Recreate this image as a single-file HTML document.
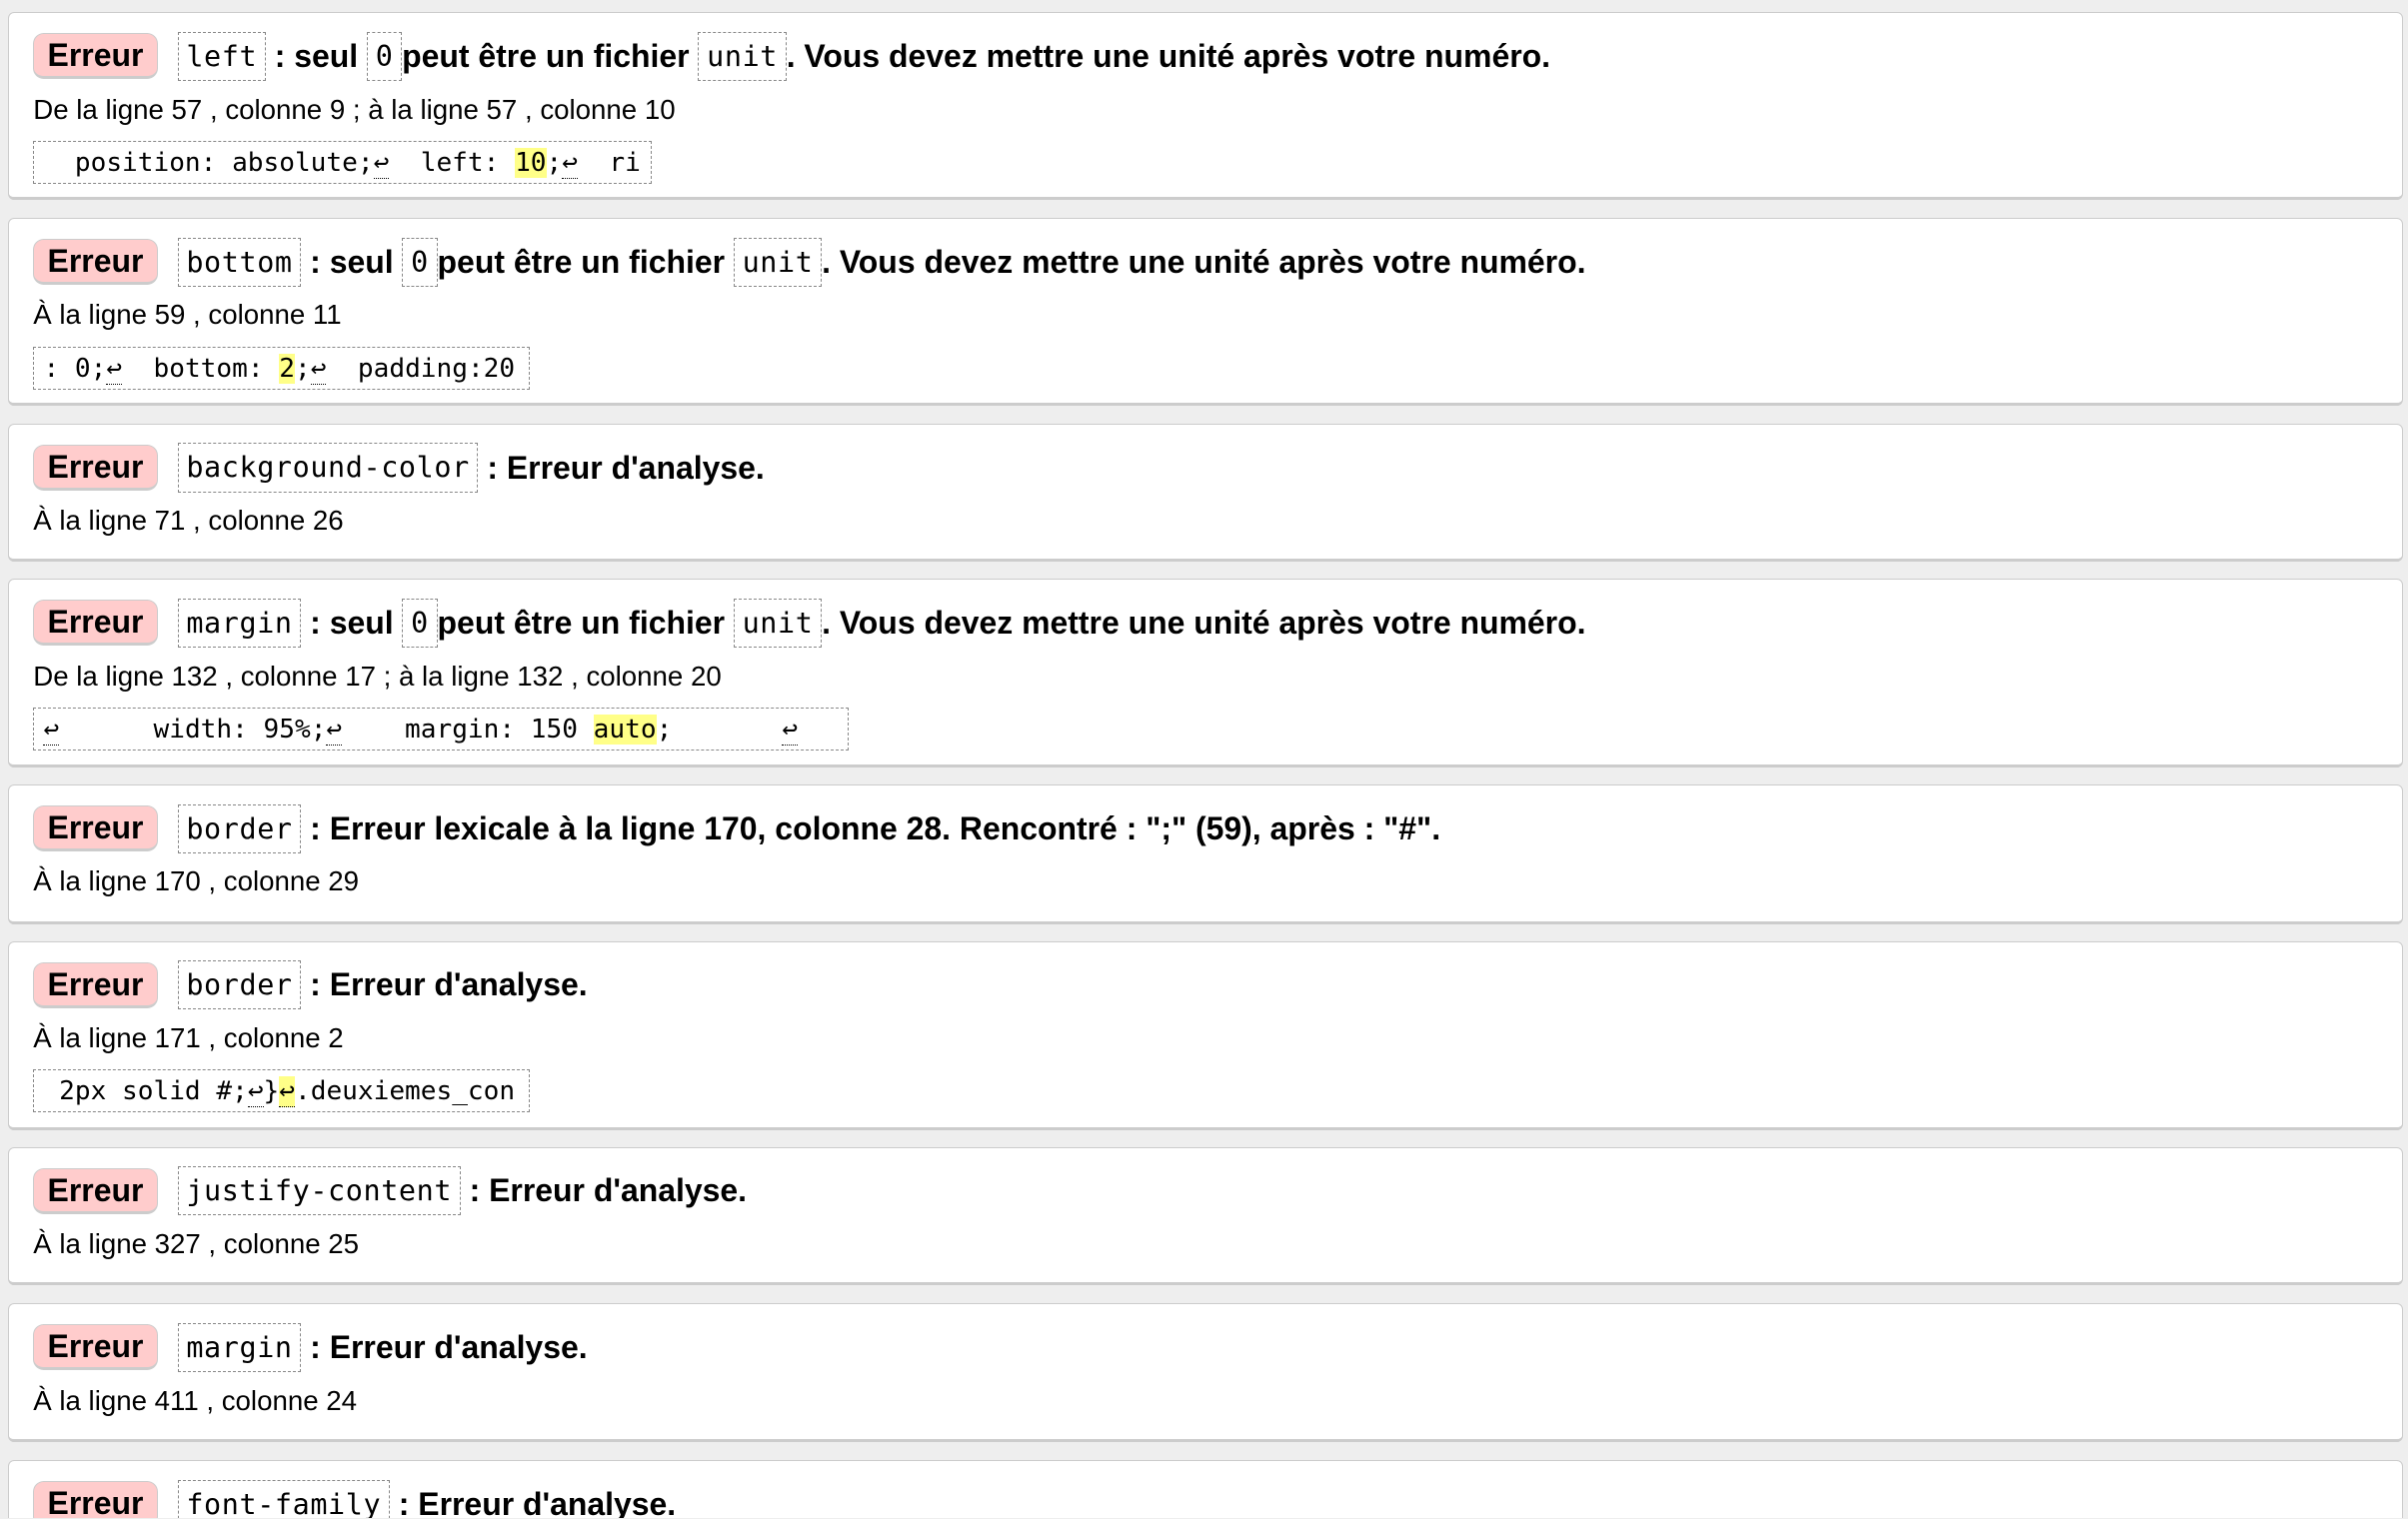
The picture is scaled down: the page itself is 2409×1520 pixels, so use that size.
<!DOCTYPE html>
<html style="height:1520px;overflow:hidden"><head><meta charset="utf-8"><style>
html,body{margin:0;padding:0;background:#eee;}
body{width:1568px;height:989px;overflow:hidden;zoom:1.5364;font-family:"Liberation Sans",Arial,sans-serif;color:#000;position:relative;}
.card{position:absolute;left:5px;width:1560px;background:#fff;border:1px solid #ccc;border-bottom:2px solid #ccc;border-radius:4px;box-sizing:border-box;padding:12px 16px 0 16px;overflow:hidden;}
.t{height:32px;display:flex;align-items:center;font-weight:bold;font-size:20.8px;white-space:pre;}
.b{background:#fcc;border:1px solid #ccc;border-bottom:2px solid #ccc;border-radius:7px;padding:0 8px;box-sizing:border-box;display:inline-block;margin-right:13px;height:30px;line-height:28px;width:81px;text-align:center;}
.m{font-family:"DejaVu Sans Mono","Liberation Mono",monospace;font-weight:normal;font-size:18.5px;border:1px dashed #888;padding:0 5px;height:32px;line-height:31px;box-sizing:border-box;display:inline-block;letter-spacing:0.4px;}
.l{font-size:18px;height:24px;line-height:24px;margin-top:7px;}
.c{margin-top:8px;height:28px;line-height:28px;border:1px dashed #888;box-sizing:border-box;font-family:"DejaVu Sans Mono","Liberation Mono",monospace;font-size:17px;white-space:pre;overflow:hidden;padding:0 6px;}
.h{background:#ff8;}
.r{border-bottom:1px dotted #000;}
</style></head><body>

<div class="card" style="top:8px;height:122px">
<div class="t"><span class="b">Erreur</span><span class="m">left</span> : seul <span class="m">0</span>peut être un fichier <span class="m">unit</span>. Vous devez mettre une unité après votre numéro.</div>
<div class="l">De la ligne 57 , colonne 9 ; à la ligne 57 , colonne 10</div>
<div class="c" style="width:403px">  position: absolute;<span class="r">↩</span>  left: <span class="h">10</span>;<span class="r">↩</span>  ri</div>
</div>

<div class="card" style="top:142px;height:122px">
<div class="t"><span class="b">Erreur</span><span class="m">bottom</span> : seul <span class="m">0</span>peut être un fichier <span class="m">unit</span>. Vous devez mettre une unité après votre numéro.</div>
<div class="l">À la ligne 59 , colonne 11</div>
<div class="c" style="width:323px">: 0;<span class="r">↩</span>  bottom: <span class="h">2</span>;<span class="r">↩</span>  padding:20</div>
</div>

<div class="card" style="top:276px;height:90px">
<div class="t"><span class="b">Erreur</span><span class="m">background-color</span> : Erreur d'analyse.</div>
<div class="l">À la ligne 71 , colonne 26</div>
</div>

<div class="card" style="top:377px;height:123px">
<div class="t"><span class="b">Erreur</span><span class="m">margin</span> : seul <span class="m">0</span>peut être un fichier <span class="m">unit</span>. Vous devez mettre une unité après votre numéro.</div>
<div class="l">De la ligne 132 , colonne 17 ; à la ligne 132 , colonne 20</div>
<div class="c" style="width:531px"><span class="r">↩</span>      width: 95%;<span class="r">↩</span>    margin: 150 <span class="h">auto</span>;       <span class="r">↩</span></div>
</div>

<div class="card" style="top:511px;height:91px">
<div class="t"><span class="b">Erreur</span><span class="m">border</span> : Erreur lexicale à la ligne 170, colonne 28. Rencontré : ";" (59), après : "#".</div>
<div class="l">À la ligne 170 , colonne 29</div>
</div>

<div class="card" style="top:613px;height:123px">
<div class="t"><span class="b">Erreur</span><span class="m">border</span> : Erreur d'analyse.</div>
<div class="l">À la ligne 171 , colonne 2</div>
<div class="c" style="width:323px"> 2px solid #;<span class="r">↩</span>}<span class="r h">↩</span>.deuxiemes_con</div>
</div>

<div class="card" style="top:747px;height:90px">
<div class="t"><span class="b">Erreur</span><span class="m">justify-content</span> : Erreur d'analyse.</div>
<div class="l">À la ligne 327 , colonne 25</div>
</div>

<div class="card" style="top:849px;height:90px">
<div class="t"><span class="b">Erreur</span><span class="m">margin</span> : Erreur d'analyse.</div>
<div class="l">À la ligne 411 , colonne 24</div>
</div>

<div class="card" style="top:951px;height:38px;border-bottom:none;border-radius:4px 4px 0 0">
<div class="t"><span class="b">Erreur</span><span class="m">font-family</span> : Erreur d'analyse.</div>
</div>

</body></html>
